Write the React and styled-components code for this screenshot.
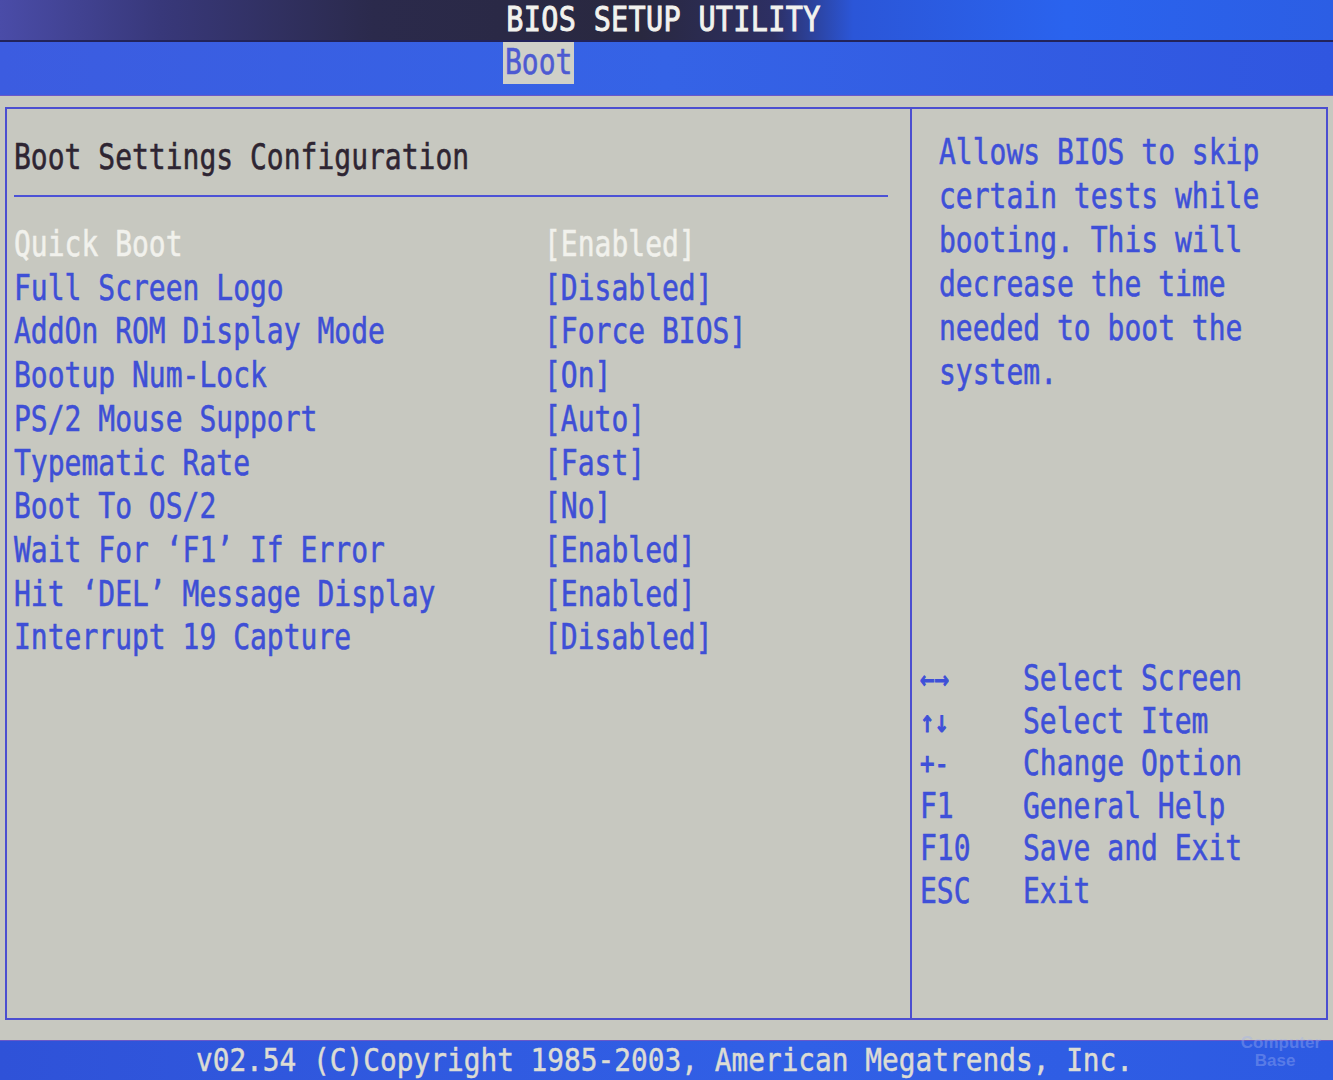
import React from "react";
import styled, { createGlobalStyle, css } from "styled-components";

const GlobalStyle = createGlobalStyle`
  html, body { margin: 0; padding: 0; background: #c7c8c0; }
  #root { width: 1333px; height: 1080px; overflow: hidden; }
`;

/* BIOS text-mode glyphs are narrow and tall: a monospace face stretched vertically */
const tall = css`
  display: inline-block;
  white-space: pre;
  transform: scaleY(1.27);
  transform-origin: 50% 50%;
  -webkit-text-stroke: 0.45px currentColor;
`;

const Screen = styled.div`
  width: 1333px;
  height: 1080px;
  display: flex;
  flex-direction: column;
  background: #c7c8c0;
  font-family: "DejaVu Sans Mono", "Liberation Mono", monospace;
  font-size: 28px;
  position: relative;
`;

const TitleBar = styled.div`
  height: 42px;
  flex: none;
  display: flex;
  align-items: center;
  justify-content: center;
  background: linear-gradient(
    90deg,
    #4a4ca8 0%,
    #38387a 12%,
    #2b2a4c 28%,
    #29283f 48%,
    #2d2f63 58%,
    #2b56d8 64%,
    #2a63ee 80%,
    #2c5ee4 100%
  );
  border-bottom: 2px solid #22235a;
  box-sizing: border-box;
`;

const Title = styled.span`
  ${tall}
  transform: scaleY(1.18);
  color: #f2f2ee;
  font-size: 28.5px;
  line-height: 40px;
  letter-spacing: 0.3px;
  margin-left: -6px;
  -webkit-text-stroke: 0.8px currentColor;
`;

const TabBar = styled.div`
  height: 54px;
  flex: none;
  display: flex;
  align-items: flex-start;
  padding-left: 503px;
  background: linear-gradient(90deg, #3c5ce0 0%, #3563e6 50%, #3056e0 100%);
  border-bottom: 1px solid #6a58c8;
  box-sizing: border-box;
`;

const Tab = styled.div`
  height: 42px;
  padding: 0 2px;
  background: ${(p) => (p.$active ? "#cfd0c8" : "transparent")};
  color: ${(p) => (p.$active ? "#4d5ad2" : "#e8e8e4")};
  display: flex;
  align-items: center;
`;

const TabLabel = styled.span`
  ${tall}
  line-height: 42px;
`;

const Body = styled.div`
  flex: 1;
  padding: 11px 5px 20px 5px;
  display: flex;
  min-height: 0;
`;

const Frame = styled.div`
  flex: 1;
  display: grid;
  grid-template-columns: 905px 1fr;
  border: 2px solid #4b4ed0;
  min-height: 0;
`;

const MainPanel = styled.section`
  border-right: 2px solid #4b4ed0;
  padding: 27px 22px 0 7px;
  display: flex;
  flex-direction: column;
`;

const Heading = styled.h1`
  margin: 0;
  font: inherit;
  line-height: 44px;
  color: #2e2532;
`;

const HeadingText = styled.span`
  ${tall}
`;

const Rule = styled.hr`
  margin: 15px 0 26px 0;
  border: none;
  height: 2px;
  background: #4c52d6;
`;

const Row = styled.div`
  display: grid;
  grid-template-columns: 530px 1fr;
  line-height: 43.7px;
  color: ${(p) => (p.$selected ? "#f1f1ec" : "#3e4fd6")};
`;

const ItemLabel = styled.span`
  ${tall}
`;

const ItemValue = styled.span`
  ${tall}
`;

const SidePanel = styled.aside`
  padding: 22px 0 0 8px;
  display: flex;
  flex-direction: column;
`;

const HelpText = styled.div`
  padding-left: 19px;
  color: #3e50d8;
  line-height: 44px;
`;

const HelpLine = styled.div`
  ${tall}
  display: block;
`;

const KeyLegend = styled.div`
  margin-top: 263px;
  display: grid;
  grid-template-columns: 103px 1fr;
  line-height: 42.6px;
  color: #3e50d8;
`;

const KeyName = styled.span`
  ${tall}
  font-size: ${(p) => (p.$small ? "24px" : "28px")};
  -webkit-text-stroke: ${(p) => (p.$small ? "0.9px" : "0.45px")} currentColor;
`;

const KeyDesc = styled.span`
  ${tall}
`;

const Footer = styled.footer`
  height: 40px;
  flex: none;
  display: flex;
  align-items: center;
  justify-content: center;
  background: linear-gradient(90deg, #2f52d8 0%, #3160e6 60%, #2d5ae2 100%);
  border-top: 1px solid #6a58c8;
  box-sizing: border-box;
`;

const FooterText = styled.span`
  ${tall}
  color: #dcdcd4;
  font-size: 27.8px;
  line-height: 40px;
  transform: scaleY(1.15);
  margin-left: -4px;
`;

/* faint site watermark in the lower right corner */
const Watermark = styled.div`
  position: absolute;
  right: 12px;
  bottom: 10px;
  display: flex;
  flex-direction: column;
  font-family: "Liberation Sans", Arial, sans-serif;
  font-weight: 700;
  font-size: 17px;
  line-height: 18px;
  color: rgba(160, 178, 240, 0.4);
  pointer-events: none;
`;

const WmLine = styled.span`
  padding-left: ${(p) => p.$indent || 0}px;
`;

const items = [
  ["Quick Boot", "[Enabled]"],
  ["Full Screen Logo", "[Disabled]"],
  ["AddOn ROM Display Mode", "[Force BIOS]"],
  ["Bootup Num-Lock", "[On]"],
  ["PS/2 Mouse Support", "[Auto]"],
  ["Typematic Rate", "[Fast]"],
  ["Boot To OS/2", "[No]"],
  ["Wait For \u2018F1\u2019 If Error", "[Enabled]"],
  ["Hit \u2018DEL\u2019 Message Display", "[Enabled]"],
  ["Interrupt 19 Capture", "[Disabled]"],
];

const help = [
  "Allows BIOS to skip",
  "certain tests while",
  "booting. This will",
  "decrease the time",
  "needed to boot the",
  "system.",
];

const keys = [
  ["\u2190\u2192", "Select Screen", true],
  ["\u2191\u2193", "Select Item", true],
  ["+-", "Change Option", true],
  ["F1", "General Help"],
  ["F10", "Save and Exit"],
  ["ESC", "Exit"],
];

export default function App() {
  return (
    <>
      <GlobalStyle />
      <Screen>
        <TitleBar>
          <Title>BIOS SETUP UTILITY</Title>
        </TitleBar>
        <TabBar>
          <Tab $active>
            <TabLabel>Boot</TabLabel>
          </Tab>
        </TabBar>
        <Body>
          <Frame>
            <MainPanel>
              <Heading>
                <HeadingText>Boot Settings Configuration</HeadingText>
              </Heading>
              <Rule />
              {items.map(([label, value], i) => (
                <Row key={label} $selected={i === 0}>
                  <ItemLabel>{label}</ItemLabel>
                  <ItemValue>{value}</ItemValue>
                </Row>
              ))}
            </MainPanel>
            <SidePanel>
              <HelpText>
                {help.map((line) => (
                  <HelpLine key={line}>{line}</HelpLine>
                ))}
              </HelpText>
              <KeyLegend>
                {keys.map(([k, d, small]) => (
                  <React.Fragment key={d}>
                    <KeyName $small={small}>{k}</KeyName>
                    <KeyDesc>{d}</KeyDesc>
                  </React.Fragment>
                ))}
              </KeyLegend>
            </SidePanel>
          </Frame>
        </Body>
        <Footer>
          <FooterText>
            v02.54 (C)Copyright 1985-2003, American Megatrends, Inc.
          </FooterText>
        </Footer>
        <Watermark>
          <WmLine>Computer</WmLine>
          <WmLine $indent={14}>Base</WmLine>
        </Watermark>
      </Screen>
    </>
  );
}
